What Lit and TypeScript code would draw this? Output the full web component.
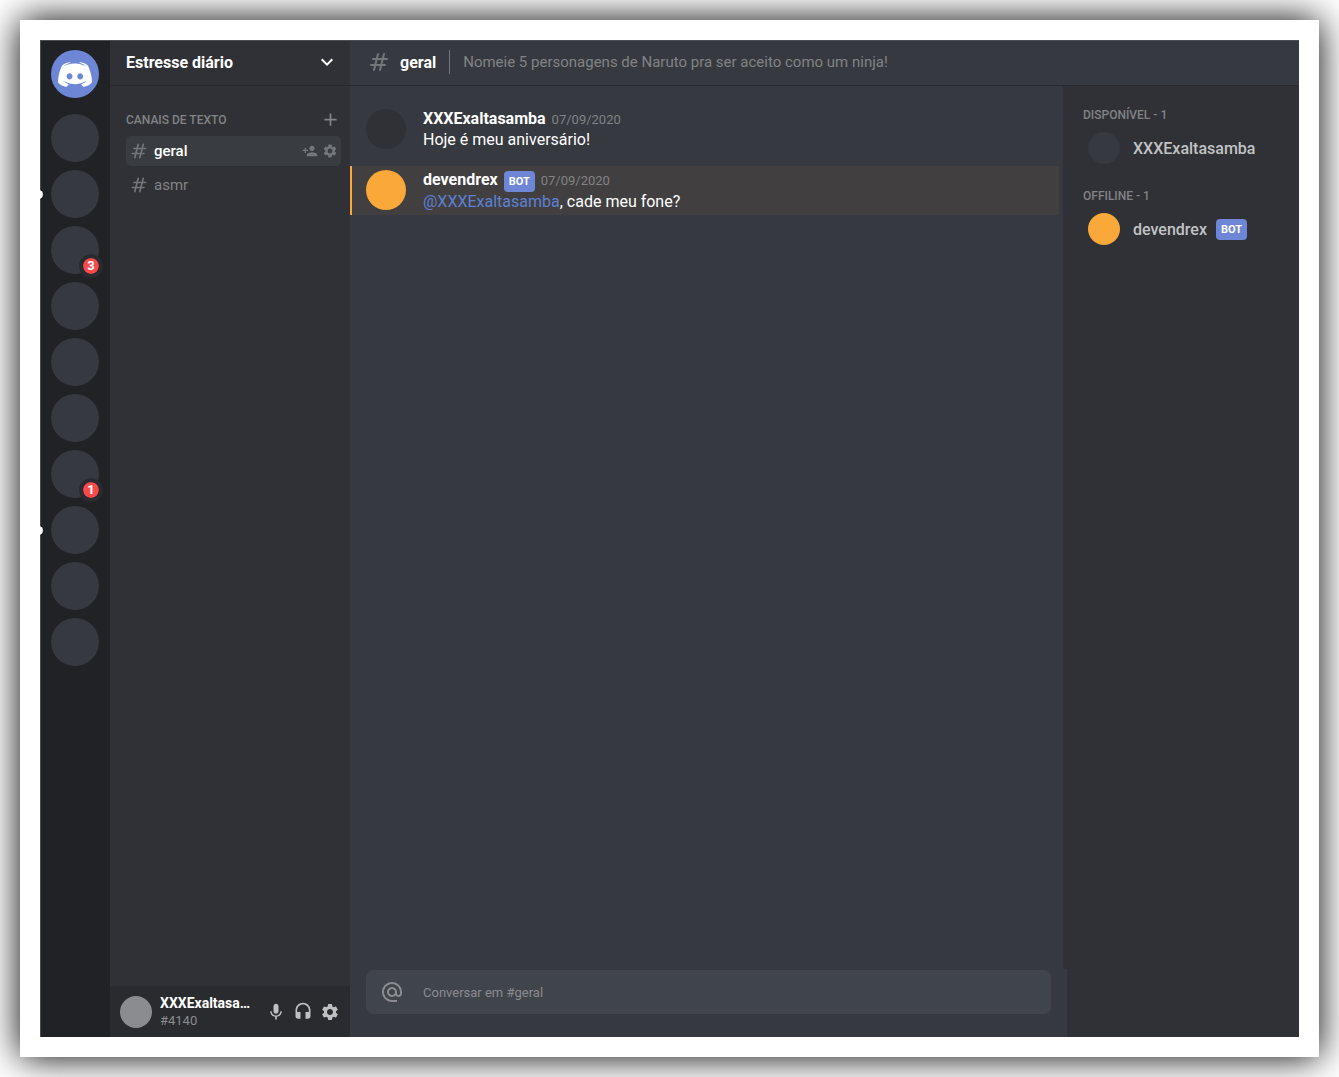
import { LitElement, html, css, svg, nothing } from "lit";
import { customElement, property } from "lit/decorators.js";
import { classMap } from "lit/directives/class-map.js";

interface Server {
  name: string;
  unread?: boolean;
  mentions?: number;
}

interface Message {
  author: string;
  date: string;
  text: string;
  mention?: string;
  bot?: boolean;
}

interface Member {
  name: string;
  bot?: boolean;
}

const SERVERS: Server[] = [
  { name: "Servidor 1" },
  { name: "Servidor 2", unread: true },
  { name: "Servidor 3", mentions: 3 },
  { name: "Servidor 4" },
  { name: "Servidor 5" },
  { name: "Servidor 6" },
  { name: "Servidor 7", mentions: 1 },
  { name: "Servidor 8", unread: true },
  { name: "Servidor 9" },
  { name: "Servidor 10" },
];

const CHANNELS = [{ name: "geral", selected: true }, { name: "asmr", selected: false }];

const MESSAGES: Message[] = [
  { author: "XXXExaltasamba", date: "07/09/2020", text: "Hoje é meu aniversário!" },
  { author: "devendrex", date: "07/09/2020", text: ", cade meu fone?", mention: "@XXXExaltasamba", bot: true },
];

const ROLES: { title: string; members: Member[] }[] = [
  { title: "Disponível - 1", members: [{ name: "XXXExaltasamba" }] },
  { title: "Offiline - 1", members: [{ name: "devendrex", bot: true }] },
];

const PATHS = {
  chevron: "M16.59 8.59L12 13.17 7.41 8.59 6 10l6 6 6-6z",
  add: "M19 13h-6v6h-2v-6H5v-2h6V5h2v6h6v2z",
  invite:
    "M15 12c2.21 0 4-1.79 4-4s-1.79-4-4-4-4 1.79-4 4 1.79 4 4 4zm-9-2V7H4v3H1v2h3v3h2v-3h3v-2H6zm9 4c-2.67 0-8 1.34-8 4v2h16v-2c0-2.66-5.33-4-8-4z",
  settings:
    "M19.14 12.94c.04-.3.06-.61.06-.94 0-.32-.02-.64-.07-.94l2.03-1.58c.18-.14.23-.41.12-.61l-1.92-3.32c-.12-.22-.37-.29-.59-.22l-2.39.96c-.5-.38-1.03-.7-1.62-.94l-.36-2.54c-.04-.24-.24-.41-.48-.41h-3.84c-.24 0-.43.17-.47.41l-.36 2.54c-.59.24-1.13.57-1.62.94l-2.39-.96c-.22-.08-.47 0-.59.22L2.74 8.87c-.12.21-.08.47.12.61l2.03 1.58c-.05.3-.09.63-.09.94s.02.64.07.94l-2.03 1.58c-.18.14-.23.41-.12.61l1.92 3.32c.12.22.37.29.59.22l2.39-.96c.5.38 1.03.7 1.62.94l.36 2.54c.05.24.24.41.48.41h3.84c.24 0 .44-.17.47-.41l.36-2.54c.59-.24 1.13-.56 1.62-.94l2.39.96c.22.08.47 0 .59-.22l1.92-3.32c.12-.22.07-.47-.12-.61l-2.01-1.58zM12 15.6c-1.98 0-3.6-1.62-3.6-3.6s1.62-3.6 3.6-3.6 3.6 1.62 3.6 3.6-1.62 3.6-3.6 3.6z",
  mic: "M12 14c1.66 0 2.99-1.34 2.99-3L15 5c0-1.66-1.34-3-3-3S9 3.34 9 5v6c0 1.66 1.34 3 3 3zm5.3-3c0 3-2.54 5.1-5.3 5.1S6.7 14 6.7 11H5c0 3.41 2.72 6.23 6 6.72V21h2v-3.28c3.28-.48 6-3.3 6-6.72h-1.7z",
  headset:
    "M12 1c-4.97 0-9 4.03-9 9v7c0 1.66 1.34 3 3 3h3v-8H5v-2c0-3.87 3.13-7 7-7s7 3.13 7 7v2h-4v8h3c1.66 0 3-1.34 3-3v-7c0-4.97-4.03-9-9-9z",
  at: "M12 2C6.48 2 2 6.48 2 12s4.48 10 10 10h5v-2h-5c-4.34 0-8-3.66-8-8s3.66-8 8-8 8 3.66 8 8v1.43c0 .79-.71 1.57-1.5 1.57s-1.5-.78-1.5-1.57V12c0-2.76-2.24-5-5-5s-5 2.24-5 5 2.24 5 5 5c1.38 0 2.64-.56 3.54-1.47.65.89 1.77 1.47 2.96 1.47 1.97 0 3.5-1.6 3.5-3.57V12c0-5.52-4.48-10-10-10zm0 13c-1.66 0-3-1.34-3-3s1.34-3 3-3 3 1.34 3 3-1.34 3-3 3z",
};

const icon = (name: keyof typeof PATHS, size: number) => html`
  <svg width=${size} height=${size} viewBox="0 0 24 24" fill="currentColor" aria-hidden="true">
    ${svg`<path d=${PATHS[name]}></path>`}
  </svg>
`;

const hashIcon = (size: number) => html`
  <svg width=${size} height=${size} viewBox="0 0 24 24" fill="none" stroke="currentColor" stroke-width="2"
    stroke-linecap="round" stroke-linejoin="round" aria-hidden="true">
    <path d="M7 20l4-16m2 16l4-16M6 9h14M4 15h14"></path>
  </svg>
`;

const logo = html`
  <svg width="34" height="25" viewBox="0 0 28 20" fill="currentColor" aria-hidden="true">
    <path
      d="M20.6644 20C20.6644 20 19.8014 18.9762 19.0822 18.0714C22.2226 17.1905 23.4212 15.2381 23.4212 15.2381C22.4384 15.881 21.5034 16.3334 20.6644 16.6429C19.4658 17.1429 18.3151 17.4762 17.1884 17.6667C14.887 18.0953 12.7774 17.9762 10.9795 17.6429C9.61301 17.381 8.4383 17 7.45547 16.6191C6.90411 16.4048 6.30479 16.1429 5.70548 15.8096C5.63356 15.7619 5.56164 15.7381 5.48973 15.6905C5.44178 15.6667 5.41781 15.6429 5.39384 15.6191C4.96233 15.381 4.7226 15.2143 4.7226 15.2143C4.7226 15.2143 5.87329 17.1191 8.91781 18.0238C8.19863 18.9286 7.31164 20 7.31164 20C2.0137 19.8334 0 16.381 0 16.381C0 8.7144 3.45205 2.50017 3.45205 2.50017C6.90411 -0.07123 10.1884 0.0002 10.1884 0.0002L10.4281 0.28591C6.11301 1.52399 4.12329 3.40493 4.12329 3.40493C4.12329 3.40493 4.65068 3.11921 5.53767 2.71446C8.10274 1.59542 10.1404 1.2859 10.9795 1.21447C11.1233 1.19066 11.2432 1.16685 11.387 1.16685C12.8493 0.97638 14.5034 0.92876 16.2295 1.11923C18.5068 1.38114 20.9521 2.0478 23.4452 3.40493C23.4452 3.40493 21.5514 1.61923 17.476 0.38115L17.8116 0.0002C17.8116 0.0002 21.0959 -0.07123 24.548 2.50017C24.548 2.50017 28 8.7144 28 16.381C28 16.381 25.9623 19.8334 20.6644 20ZM9.51712 8.88106C8.15068 8.88106 7.07192 10.0715 7.07192 11.5239C7.07192 12.9763 8.17466 14.1667 9.51712 14.1667C10.8836 14.1667 11.9623 12.9763 11.9623 11.5239C11.9863 10.0715 10.8836 8.88106 9.51712 8.88106ZM18.2671 8.88106C16.9007 8.88106 15.8219 10.0715 15.8219 11.5239C15.8219 12.9763 16.9247 14.1667 18.2671 14.1667C19.6336 14.1667 20.7123 12.9763 20.7123 11.5239C20.7123 10.0715 19.6336 8.88106 18.2671 8.88106Z"
    ></path>
  </svg>
`;

const reset = css`
  * {
    box-sizing: border-box;
    margin: 0;
    padding: 0;
  }
  button {
    border: 0;
    background: none;
    color: inherit;
    font: inherit;
    cursor: pointer;
  }
  a {
    color: inherit;
    text-decoration: none;
  }
  ul {
    list-style: none;
  }
  svg {
    display: block;
    flex: none;
  }
  .icon-button {
    display: flex;
    flex: none;
  }
  .bot {
    padding: 0 5px;
    border-radius: 4px;
    background: var(--discord);
    color: var(--white);
    font-size: 11px;
    font-weight: 700;
    line-height: 21px;
  }
`;

@customElement("server-list")
export class ServerList extends LitElement {
  static styles = [
    reset,
    css`
      :host {
        display: block;
        background: var(--tertiary);
        box-shadow: inset 1px 1px 0 var(--edge);
      }
      .servers {
        display: flex;
        flex-direction: column;
        align-items: center;
        gap: 8px;
        padding: 10px 0;
      }
      .home {
        margin-bottom: 8px;
      }
      .server {
        position: relative;
        display: flex;
        align-items: center;
        justify-content: center;
        width: 48px;
        height: 48px;
        border-radius: 50%;
        background: var(--primary);
        color: var(--white);
      }
      .home .server {
        background: var(--discord);
      }
      .unread {
        position: absolute;
        top: 20px;
        left: -17px;
        width: 9px;
        height: 9px;
        border-radius: 50%;
        background: var(--white);
      }
      .badge {
        position: absolute;
        right: -4px;
        bottom: -4px;
        box-sizing: content-box;
        min-width: 16px;
        border: 4px solid var(--quaternary);
        border-radius: 12px;
        background: var(--notification);
        background-clip: padding-box;
        font-size: 13px;
        font-weight: 700;
        line-height: 16px;
        text-align: center;
      }
    `,
  ];

  render() {
    return html`
      <nav aria-label="Servidores">
        <ul class="servers">
          <li class="home"><button class="server" aria-label="Início">${logo}</button></li>
          ${SERVERS.map(
            (s) => html`
              <li>
                <button class="server" aria-label=${s.name}>
                  ${s.unread ? html`<span class="unread"></span>` : nothing}
                  ${s.mentions ? html`<span class="badge">${s.mentions}</span>` : nothing}
                </button>
              </li>
            `,
          )}
        </ul>
      </nav>
    `;
  }
}

@customElement("channel-sidebar")
export class ChannelSidebar extends LitElement {
  static styles = [
    reset,
    css`
      :host {
        display: flex;
        flex-direction: column;
        background: var(--secondary);
      }
      .title {
        display: flex;
        align-items: center;
        justify-content: space-between;
        height: 46px;
        padding: 0 11px 1px 16px;
        border-bottom: 1px solid var(--line);
        box-shadow: inset 0 1px 0 var(--edge);
        color: var(--white);
        font-size: 16px;
        font-weight: 700;
      }
      .channels {
        flex: 1;
        padding: 23px 9px 0 16px;
      }
      .category {
        display: flex;
        align-items: center;
        justify-content: space-between;
        height: 21px;
        margin-bottom: 6px;
        color: var(--senary);
      }
      .category h2 {
        font-size: 12px;
        font-weight: 500;
        text-transform: uppercase;
      }
      .list {
        display: flex;
        flex-direction: column;
        gap: 4px;
      }
      .channel {
        display: flex;
        align-items: center;
        gap: 4px;
        height: 30px;
        padding: 0 3px;
        border-radius: 5px;
        color: var(--symbol);
      }
      .channel.selected {
        background: var(--quinary);
      }
      .link {
        display: flex;
        flex: 1;
        align-items: center;
        gap: 5px;
      }
      .name {
        color: var(--senary);
        font-size: 15px;
      }
      .selected .name {
        color: var(--white);
        font-weight: 500;
      }
      .user {
        display: flex;
        align-items: center;
        gap: 8px;
        height: 51px;
        padding: 0 10px;
        background: var(--quaternary);
      }
      .avatar {
        flex: none;
        width: 32px;
        height: 32px;
        border-radius: 50%;
        background: var(--gray);
      }
      .who {
        flex: 1;
        min-width: 0;
        line-height: 17px;
      }
      .nick {
        overflow: hidden;
        color: var(--white);
        font-size: 14px;
        font-weight: 700;
        text-overflow: ellipsis;
        white-space: nowrap;
      }
      .tag {
        color: var(--gray);
        font-size: 13px;
      }
      .tools {
        display: flex;
        gap: 7px;
        color: #bfc0c1;
      }
    `,
  ];

  render() {
    return html`
      <button class="title">Estresse diário ${icon("chevron", 24)}</button>
      <nav class="channels" aria-label="Canais">
        <div class="category">
          <h2>Canais de texto</h2>
          <button class="icon-button" aria-label="Criar canal">${icon("add", 21)}</button>
        </div>
        <ul class="list">
          ${CHANNELS.map(
            (c) => html`
              <li class=${classMap({ channel: true, selected: c.selected })}>
                <a class="link" href="#${c.name}">${hashIcon(20)}<span class="name">${c.name}</span></a>
                ${c.selected
                  ? html`
                      <button class="icon-button" aria-label="Convidar">${icon("invite", 16)}</button>
                      <button class="icon-button" aria-label="Editar canal">${icon("settings", 16)}</button>
                    `
                  : nothing}
              </li>
            `,
          )}
        </ul>
      </nav>
      <footer class="user">
        <span class="avatar"></span>
        <div class="who">
          <p class="nick">XXXExaltasamba</p>
          <p class="tag">#4140</p>
        </div>
        <div class="tools">
          <button class="icon-button" aria-label="Microfone">${icon("mic", 20)}</button>
          <button class="icon-button" aria-label="Áudio">${icon("headset", 20)}</button>
          <button class="icon-button" aria-label="Configurações">${icon("settings", 20)}</button>
        </div>
      </footer>
    `;
  }
}

@customElement("chat-message")
export class ChatMessage extends LitElement {
  @property({ attribute: false }) message!: Message;

  static styles = [
    reset,
    css`
      :host {
        display: block;
      }
      .message {
        display: flex;
        gap: 17px;
        min-height: 48px;
        margin-right: 4px;
        padding: 4px 16px 4px 14px;
        border-left: 2px solid transparent;
      }
      .message.highlight {
        border-left-color: var(--mention);
        background: var(--mention-message);
      }
      .avatar {
        flex: none;
        width: 40px;
        height: 40px;
        border-radius: 50%;
        background: var(--secondary);
      }
      .highlight .avatar {
        background: var(--mention);
      }
      .meta {
        display: flex;
        align-items: baseline;
        gap: 6px;
        min-height: 21px;
        line-height: 19px;
      }
      .author {
        color: var(--white);
        font-size: 16px;
        font-weight: 700;
      }
      .date {
        color: var(--senary);
        font-size: 13px;
      }
      .text {
        color: var(--white);
        font-size: 16px;
        line-height: 19px;
      }
      .mention {
        color: var(--link);
      }
    `,
  ];

  render() {
    const m = this.message;
    return html`
      <article class=${classMap({ message: true, highlight: !!m.mention })}>
        <span class="avatar"></span>
        <div>
          <header class="meta">
            <strong class="author">${m.author}</strong>
            ${m.bot ? html`<span class="bot">BOT</span>` : nothing}
            <time class="date">${m.date}</time>
          </header>
          <p class="text">${m.mention ? html`<a class="mention" href="#mention">${m.mention}</a>` : nothing}${m.text}</p>
        </div>
      </article>
    `;
  }
}

@customElement("chat-panel")
export class ChatPanel extends LitElement {
  static styles = [
    reset,
    css`
      :host {
        display: flex;
        flex-direction: column;
        min-width: 0;
        background: var(--primary);
      }
      .messages {
        display: flex;
        flex: 1;
        flex-direction: column;
        gap: 13px;
        padding-top: 19px;
        border-right: 4px solid var(--secondary);
      }
      .composer {
        padding: 1px 16px 23px;
      }
      .box {
        display: flex;
        align-items: center;
        gap: 19px;
        height: 44px;
        padding: 0 14px;
        border-radius: 7px;
        background: var(--chat-input);
        color: var(--gray);
      }
      .field {
        flex: 1;
        min-width: 0;
        border: 0;
        outline: 0;
        background: none;
        color: var(--white);
        font: inherit;
        font-size: 13px;
      }
      .field::placeholder {
        color: var(--gray);
        opacity: 1;
      }
    `,
  ];

  render() {
    return html`
      <div class="messages">${MESSAGES.map((m) => html`<chat-message .message=${m}></chat-message>`)}</div>
      <form class="composer">
        <label class="box">
          ${icon("at", 24)}
          <input class="field" type="text" placeholder="Conversar em #geral" aria-label="Conversar em #geral" />
        </label>
      </form>
    `;
  }
}

@customElement("member-list")
export class MemberList extends LitElement {
  static styles = [
    reset,
    css`
      :host {
        display: block;
        background: var(--secondary);
      }
      .roles {
        display: flex;
        flex-direction: column;
        gap: 25px;
        padding: 22px 16px;
      }
      .role {
        margin-bottom: 9px;
        color: var(--senary);
        font-size: 12px;
        font-weight: 500;
        line-height: 15px;
        text-transform: uppercase;
      }
      .member {
        display: flex;
        align-items: center;
        padding-left: 5px;
      }
      .avatar {
        flex: none;
        width: 32px;
        height: 32px;
        margin-right: 13px;
        border-radius: 50%;
        background: var(--primary);
      }
      .avatar.is-bot {
        background: var(--mention);
      }
      .name {
        margin-right: 9px;
        color: #c2c3c4;
        font-size: 16px;
        font-weight: 500;
      }
    `,
  ];

  render() {
    return html`
      <aside class="roles" aria-label="Membros">
        ${ROLES.map(
          (r) => html`
            <section>
              <h2 class="role">${r.title}</h2>
              <ul>
                ${r.members.map(
                  (m) => html`
                    <li class="member">
                      <span class=${classMap({ avatar: true, "is-bot": !!m.bot })}></span>
                      <strong class="name">${m.name}</strong>
                      ${m.bot ? html`<span class="bot">BOT</span>` : nothing}
                    </li>
                  `,
                )}
              </ul>
            </section>
          `,
        )}
      </aside>
    `;
  }
}

@customElement("app-root")
export class AppRoot extends LitElement {
  static styles = [
    reset,
    css`
      :host {
        --primary: #36393f;
        --secondary: #2f3136;
        --tertiary: #202225;
        --quaternary: #292b2f;
        --quinary: #393d42;
        --senary: #828386;
        --white: #fff;
        --gray: #8a8c90;
        --chat-input: #40444b;
        --symbol: #74777a;
        --notification: #f84a4b;
        --discord: #6e86d6;
        --mention: #f9a839;
        --mention-message: #413f3f;
        --link: #5d80d6;
        --line: #27292d;
        --edge: #4b4d51;
        box-sizing: border-box;
        display: flex;
        min-height: 100vh;
        padding: 20px;
        overflow: hidden;
        background: #fff;
        font-family: Roboto, "Liberation Sans", sans-serif;
      }
      .frame {
        display: flex;
        flex: 1;
        padding: 20px;
        background: #fff;
        box-shadow: 0 0 35px #000;
      }
      .window {
        display: grid;
        flex: 1;
        grid-template-columns: 70px 240px minmax(0, 1fr);
      }
      .main {
        display: flex;
        flex-direction: column;
        min-width: 0;
      }
      .channel-bar {
        display: flex;
        align-items: center;
        height: 46px;
        padding: 0 17px 1px;
        border-bottom: 1px solid var(--line);
        background: var(--primary);
        box-shadow: inset 0 1px 0 var(--edge);
        color: var(--symbol);
        white-space: nowrap;
      }
      .channel-name {
        margin-left: 9px;
        color: var(--white);
        font-size: 16px;
        font-weight: 700;
      }
      .topic {
        margin-left: 13px;
        padding-left: 13px;
        border-left: 1px solid var(--symbol);
        color: var(--senary);
        font-size: 15px;
        line-height: 24px;
      }
      .body {
        display: grid;
        flex: 1;
        grid-template-columns: minmax(0, 1fr) 232px;
      }
    `,
  ];

  render() {
    return html`
      <div class="frame">
        <div class="window">
          <server-list></server-list>
          <channel-sidebar></channel-sidebar>
          <main class="main">
            <header class="channel-bar">
              ${hashIcon(24)}
              <h1 class="channel-name">geral</h1>
              <p class="topic">Nomeie 5 personagens de Naruto pra ser aceito como um ninja!</p>
            </header>
            <div class="body">
              <chat-panel></chat-panel>
              <member-list></member-list>
            </div>
          </main>
        </div>
      </div>
    `;
  }
}
